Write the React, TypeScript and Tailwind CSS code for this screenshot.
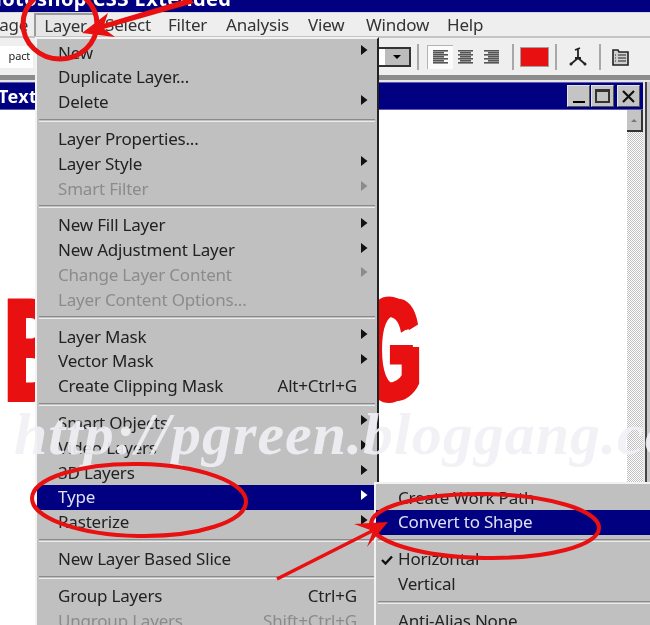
const FONT = "font-['Noto_Sans',sans-serif]";

type Row =
  | { sep: true }
  | { sep?: false; label: string; arrow?: boolean; off?: boolean; active?: boolean; key2?: string; check?: boolean };

const layerMenu: Row[] = [
  { label: "New", arrow: true },
  { label: "Duplicate Layer..." },
  { label: "Delete", arrow: true },
  { sep: true },
  { label: "Layer Properties..." },
  { label: "Layer Style", arrow: true },
  { label: "Smart Filter", arrow: true, off: true },
  { sep: true },
  { label: "New Fill Layer", arrow: true },
  { label: "New Adjustment Layer", arrow: true },
  { label: "Change Layer Content", arrow: true, off: true },
  { label: "Layer Content Options...", off: true },
  { sep: true },
  { label: "Layer Mask", arrow: true },
  { label: "Vector Mask", arrow: true },
  { label: "Create Clipping Mask", key2: "Alt+Ctrl+G" },
  { sep: true },
  { label: "Smart Objects", arrow: true },
  { label: "Video Layers", arrow: true },
  { label: "3D Layers", arrow: true },
  { label: "Type", arrow: true, active: true },
  { label: "Rasterize", arrow: true },
  { sep: true },
  { label: "New Layer Based Slice" },
  { sep: true },
  { label: "Group Layers", key2: "Ctrl+G" },
  { label: "Ungroup Layers", key2: "Shift+Ctrl+G", off: true },
];

const typeMenu: Row[] = [
  { label: "Create Work Path" },
  { label: "Convert to Shape", active: true },
  { sep: true },
  { label: "Horizontal", check: true },
  { label: "Vertical" },
  { sep: true },
  { label: "Anti-Alias None" },
];

function MenuRows({ rows, textPad }: { rows: Row[]; textPad: string }) {
  return (
    <>
      {rows.map((r, i) =>
        r.sep ? (
          <div key={i} className="flex h-[12px] items-center px-[2px]">
            <div className="h-[3px] w-full border-t border-b border-t-[#8a8a8a] border-b-[#ececec]" />
          </div>
        ) : (
          <div
            key={i}
            className={`relative flex h-[24.8px] shrink-0 items-center whitespace-nowrap ${textPad} pr-[20px] ${
              r.active ? "bg-[#000080] text-[#dfe0f5]" : r.off ? "text-[#8b8b8b]" : "text-[#222222]"
            }`}
          >
            {r.check && (
              <svg className="absolute left-[5px] top-[8px]" width="12" height="10" viewBox="0 0 12 10">
                <path d="M1 5 L4.5 8.5 L11 1.5" fill="none" stroke="#111" strokeWidth="2.4" />
              </svg>
            )}
            <span>{r.label}</span>
            {r.key2 && <span className="ml-auto">{r.key2}</span>}
            {r.arrow && (
              <svg className="absolute right-[9px] top-[5px]" width="7" height="10" viewBox="0 0 7 10">
                <path d="M0 0 L6.5 5 L0 10 Z" fill={r.active ? "#ffffff" : r.off ? "#8b8b8b" : "#111111"} />
              </svg>
            )}
          </div>
        ),
      )}
    </>
  );
}

function AlignIcon({ kind }: { kind: "l" | "c" | "r" }) {
  const rows = [15, 11, 15, 11, 15, 11, 15];
  return (
    <svg width="17" height="16" viewBox="0 0 17 16">
      {rows.map((w, i) => (
        <rect
          key={i}
          x={kind === "l" ? 1 : kind === "c" ? 8.5 - w / 2 : 16 - w}
          y={1 + i * 2}
          width={w}
          height="1.6"
          fill="#555555"
        />
      ))}
    </svg>
  );
}

function ToolSep() {
  return <div className="h-[26px] w-[2px] bg-[#a8a8a8]" />;
}

export default function App() {
  return (
    <div className={`relative flex h-[625px] w-[650px] flex-col overflow-hidden bg-[#bdbdbd] text-[17px] tracking-[-0.2px] blur-[0.35px] ${FONT}`}>
      {/* application title bar */}
      <div className="flex h-[12px] shrink-0 items-end overflow-hidden bg-[#000080]">
        <span className="ml-[-24px] mb-[2px] whitespace-nowrap text-[20px] leading-[22px] font-bold tracking-[0.4px] text-white">
          Photoshop CS3 Extended
        </span>
      </div>

      {/* menu bar */}
      <div className="flex h-[24px] shrink-0 items-center whitespace-nowrap border-t border-[#d8d8d8] bg-[#eeeeee] text-[#333333]">
        <span className="ml-[-22px] w-[56px] text-right pr-[12px]">Image</span>
        <span className="flex h-full w-[61px] items-center justify-center border-t-2 border-l-2 border-[#9a9a9a] bg-[#e6e6e6]">Layer</span>
        <span className="ml-[10px] w-[63px]">Select</span>
        <span className="w-[58px]">Filter</span>
        <span className="w-[82px]">Analysis</span>
        <span className="w-[58px]">View</span>
        <span className="w-[81px]">Window</span>
        <span>Help</span>
      </div>

      {/* options bar */}
      <div className="flex h-[39px] shrink-0 items-center border-t-2 border-[#c4c4c4] bg-[#efefef]">
        <div className="flex h-[22px] w-[33px] items-center justify-end overflow-hidden bg-white pr-[3px] text-[11px] text-[#222]">
          pact
        </div>
        <div className="ml-[345px] flex h-[20px] w-[33px] items-center justify-end border-t-2 border-r-2 border-b-2 border-[#333333] bg-white">
          <div className="flex h-full w-[24px] items-center justify-center bg-[#bcbcbc]">
            <div className="h-0 w-0 border-x-[4px] border-t-[4px] border-x-transparent border-t-black" />
          </div>
        </div>
        <div className="ml-[6px]"><ToolSep /></div>
        <div className="ml-[8px] flex h-[24px] w-[26px] items-center justify-center border-t border-l border-[#b4b4b4] bg-[#fbfbfb]">
          <AlignIcon kind="l" />
        </div>
        <div className="ml-[4px]"><AlignIcon kind="c" /></div>
        <div className="ml-[9px]"><AlignIcon kind="r" /></div>
        <div className="ml-[12px]"><ToolSep /></div>
        <div className="ml-[6px] h-[20px] w-[29px] border border-[#a0a0a0] bg-[#e81010]" />
        <div className="ml-[6px]"><ToolSep /></div>
        <svg className="ml-[12px]" width="18" height="22" viewBox="0 0 18 22">
          <path d="M6 4 L11 2 M9 3 L9 12 M6 12 L12 12 M9 12 L2 18 M9 12 L16 18" fill="none" stroke="#222" strokeWidth="1.8" />
          <circle cx="2" cy="18" r="1.5" fill="#222" />
          <circle cx="16" cy="18" r="1.5" fill="#222" />
        </svg>
        <div className="ml-[12px]"><ToolSep /></div>
        <svg className="ml-[11px]" width="18" height="18" viewBox="0 0 18 18">
          <path d="M1 2 L6 2 L7 4 L16 4 L16 17 L1 17 Z" fill="#cfcfcf" stroke="#222" strokeWidth="1.6" />
          <path d="M6 7 H14 M6 10 H14 M6 13 H14 M3 7 H4 M3 10 H4 M3 13 H4" stroke="#222" strokeWidth="1.2" />
        </svg>
      </div>

      <div className="h-[5px] shrink-0 bg-[#8c8c8c]" />

      {/* document window */}
      <div className="flex min-h-0 flex-1 bg-[#e6e6e6] pt-[2px]">
        <div className="flex min-w-0 flex-1 flex-col">
          <div className="flex h-[28px] shrink-0 items-center border-y border-[#5b5bb0] bg-[#000080]">
            <span className="ml-[-2px] text-[18px] font-bold tracking-[0.4px] text-white">Text</span>
            <div className="ml-auto mr-[3px] flex gap-[1px]">
              <div className="flex h-[22px] w-[23px] items-end justify-center border border-[#e4e4e4] border-r-[#555] border-b-[#555] bg-[#c4c4c4] pb-[3px]">
                <div className="h-[2px] w-[12px] bg-black" />
              </div>
              <div className="flex h-[22px] w-[23px] items-center justify-center border border-[#e4e4e4] border-r-[#555] border-b-[#555] bg-[#c4c4c4]">
                <div className="h-[14px] w-[15px] border-2 border-t-[3px] border-[#333]" />
              </div>
              <div className="ml-[2px] flex h-[22px] w-[23px] items-center justify-center border border-[#e4e4e4] border-r-[#555] border-b-[#555] bg-[#c4c4c4]">
                <svg width="13" height="13" viewBox="0 0 13 13">
                  <path d="M1 1 L12 12 M12 1 L1 12" stroke="#111" strokeWidth="2.2" />
                </svg>
              </div>
            </div>
          </div>
          <div className="flex min-h-0 flex-1">
            <div className="relative flex-1 bg-white">
              <span className="absolute left-[4px] top-[169px] origin-left scale-x-[0.486] font-['Liberation_Sans',sans-serif] text-[144px] leading-[144px] font-bold tracking-normal whitespace-nowrap text-[#e81010] [-webkit-text-stroke:4px_#e81010] [text-shadow:5px_0_#e81010,10px_0_#e81010,15px_0_#e81010]">
                BLOGGANG
              </span>
            </div>
            <div className="flex w-[16px] flex-col bg-[repeating-conic-gradient(#c0c0c0_0_25%,#ffffff_0_50%)] bg-[length:2px_2px]">
              <div className="flex h-[22px] items-center justify-center border-r-2 border-b-2 border-r-[#333] border-b-[#333] bg-[#c4c4c4]">
                <div className="h-0 w-0 border-x-[3px] border-b-[3px] border-x-transparent border-b-[#777]" />
              </div>
            </div>
          </div>
        </div>
        <div className="ml-[2px] w-[2px] bg-[#444444]" />
        <div className="w-[3px] bg-[#c8c8c8]" />
      </div>

      {/* Layer menu */}
      <div className="absolute left-[35px] top-[37px] h-[600px] w-[344px] border-t-2 border-l-2 border-r-2 border-t-[#f2f2f2] border-l-[#f2f2f2] border-r-[#222222] bg-[#c0c0c0] pt-[1px]">
        <MenuRows rows={layerMenu} textPad="pl-[21px]" />
      </div>

      {/* Type submenu */}
      <div className="absolute left-[374px] top-[482px] h-[160px] w-[290px] border-t-2 border-l-2 border-[#f2f2f2] bg-[#c0c0c0] pt-[1px]">
        <MenuRows rows={typeMenu} textPad="pl-[22px]" />
      </div>

      {/* watermark */}
      <span className="pointer-events-none absolute left-[14px] top-[398px] whitespace-nowrap font-['Liberation_Serif',serif] text-[60px] leading-[72px] font-bold tracking-[1px] text-[#f1f1f6] italic opacity-90">
        http://pgreen.bloggang.com
      </span>

      {/* red annotations */}
      <svg className="pointer-events-none absolute inset-0" width="650" height="625" viewBox="0 0 650 625">
        <g fill="none" stroke="#e81010">
          <ellipse cx="60" cy="24" rx="37" ry="35" strokeWidth="5" />
          <ellipse cx="139" cy="500" rx="107" ry="36" strokeWidth="4" transform="rotate(1 139 500)" />
          <ellipse cx="485" cy="526" rx="114" ry="32" strokeWidth="4" transform="rotate(1 485 526)" />
        </g>
        <path d="M190 -2 L194 3 L100 30 L96 26 Z" fill="#e81010" />
        <path d="M108 13 L82 33 L115 37 L103 28 Z" fill="#e81010" />
        <path d="M277 579 L372 531" stroke="#e81010" strokeWidth="3.5" />
        <path d="M354 524 L388 522 L367 547 L373 531 Z" fill="#e81010" />
      </svg>
    </div>
  );
}
